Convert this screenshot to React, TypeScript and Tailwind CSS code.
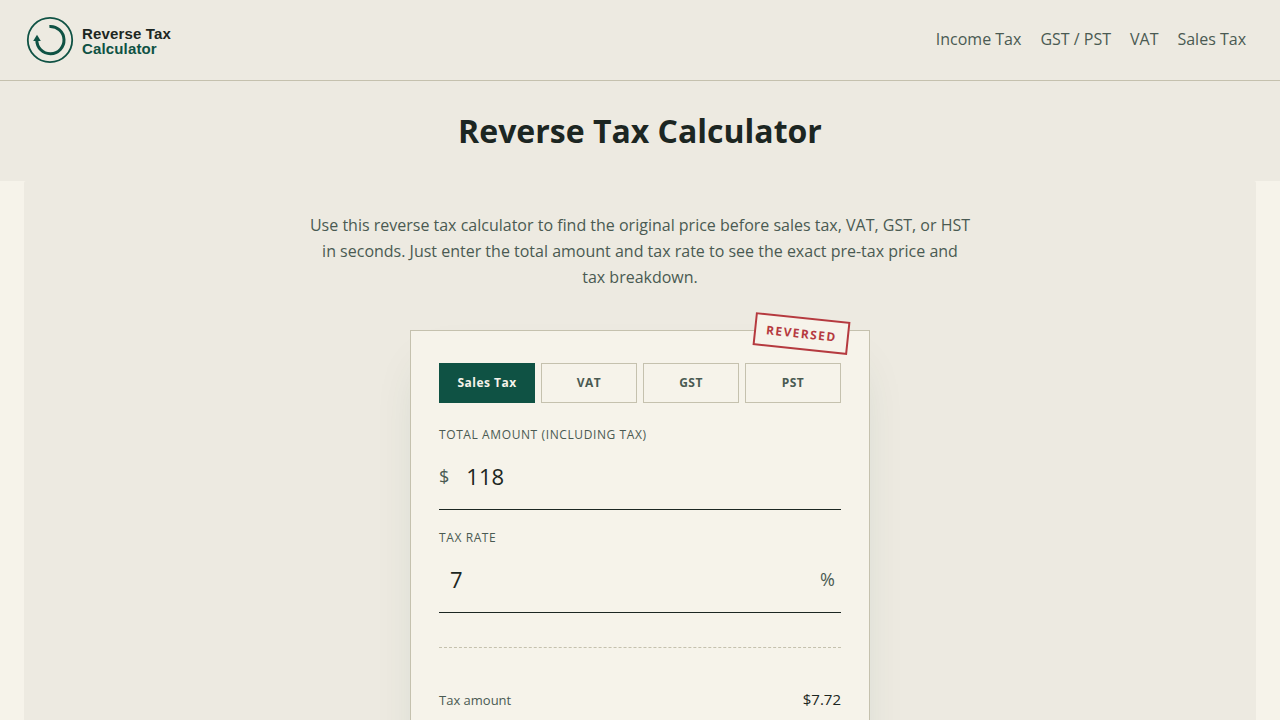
import { useState } from 'react';
import clsx from 'clsx';

const navLinks = [
  { label: 'Income Tax', href: '#income-tax' },
  { label: 'GST / PST', href: '#gst-pst' },
  { label: 'VAT', href: '#vat' },
  { label: 'Sales Tax', href: '#sales-tax' },
];

const taxTypes = ['Sales Tax', 'VAT', 'GST', 'PST'];

function Logo() {
  return (
    <a href="#home" className="flex items-center gap-2">
      <svg className="w-12 h-12" viewBox="0 0 48 48" fill="none" stroke="#0f5244" aria-hidden="true">
        <circle cx="24" cy="24" r="22.2" strokeWidth="1.8" />
        <path d="M23.4 10.6A13.6 13.6 0 1 1 10.8 24" strokeWidth="3" />
        <path d="M11 18.8L14.8 24.9H7.2Z" fill="#0f5244" stroke="none" />
      </svg>
      <span className="flex flex-col pt-0.5 font-['Liberation_Sans',Arial,sans-serif] text-[15px] leading-[15px] font-bold tracking-[0.01em]">
        <span>Reverse Tax</span>
        <span className="text-[#0f5244]">Calculator</span>
      </span>
    </a>
  );
}

export default function App() {
  const [taxType, setTaxType] = useState('Sales Tax');
  const [total, setTotal] = useState('118');
  const [rate, setRate] = useState('7');

  const amount = Number(total) || 0;
  const tax = amount - amount / (1 + (Number(rate) || 0) / 100);

  return (
    <div className="min-h-screen bg-[#f6f3ea] text-[#1c2622] font-['Open_Sans',sans-serif]">
      <header className="flex items-center justify-between bg-[#edeae1] border-b border-[#c5c1ae] py-4 pl-[26px] pr-[34px]">
        <Logo />
        <nav className="flex gap-[19px] pb-0.5 text-base text-[#4a5a52]">
          {navLinks.map(link => (
            <a key={link.label} href={link.href}>{link.label}</a>
          ))}
        </nav>
      </header>

      <section className="bg-[#edeae1] py-[30px] text-center">
        <h1 className="text-[32px] leading-10 font-bold">Reverse Tax Calculator</h1>
      </section>

      <main className="mx-6 bg-[#edeae1] rounded-t-xs px-6 pt-[31px] pb-16">
        <p className="mx-auto max-w-[662px] text-center text-base leading-[26px] text-[#4a5a52]">
          Use this reverse tax calculator to find the original price before sales tax, VAT, GST, or HST in seconds. Just
          enter the total amount and tax rate to see the exact pre-tax price and tax breakdown.
        </p>

        <div className="relative mx-auto mt-10 max-w-[460px] bg-[#f6f3ea] border border-[#c5c1ae] px-7 py-8 shadow-[0_24px_48px_-18px_rgba(15,82,68,0.16)]">
          <span className="absolute -top-3.5 right-5 rotate-6 bg-[#f6f3ea] border-2 border-[#b53a3f] px-2.5 py-1.5 text-[12px] leading-[17px] font-bold tracking-[0.12em] text-[#b53a3f]">
            REVERSED
          </span>

          <div className="grid grid-cols-4 gap-1.5">
            {taxTypes.map(type => (
              <button
                key={type}
                type="button"
                onClick={() => setTaxType(type)}
                className={clsx(
                  'h-10 border text-[12px] font-bold tracking-[0.04em]',
                  taxType === type
                    ? 'bg-[#0f5244] border-[#0f5244] text-[#f6f3ea]'
                    : 'border-[#c5c1ae] text-[#4a5a52]'
                )}
              >
                {type}
              </button>
            ))}
          </div>

          <div className="mt-6">
            <label htmlFor="total" className="block text-[12px] leading-4 tracking-wider text-[#4a5a52]">
              TOTAL AMOUNT (INCLUDING TAX)
            </label>
            <div className="flex items-center border-b border-[#1c2622] py-px">
              <span className="text-lg text-[#4a5a52]">$</span>
              <input
                id="total"
                value={total}
                onChange={e => setTotal(e.target.value)}
                inputMode="decimal"
                className="min-w-0 flex-1 h-16 bg-transparent px-[17px] text-[22px] outline-none"
              />
            </div>
          </div>

          <div className="mt-5">
            <label htmlFor="rate" className="block text-[12px] leading-4 tracking-wider text-[#4a5a52]">
              TAX RATE
            </label>
            <div className="flex items-center border-b border-[#1c2622] py-px">
              <input
                id="rate"
                value={rate}
                onChange={e => setRate(e.target.value)}
                inputMode="decimal"
                className="min-w-0 flex-1 h-16 bg-transparent px-[11px] text-[22px] outline-none"
              />
              <span className="pr-1.5 text-lg text-[#4a5a52]">%</span>
            </div>
          </div>

          <div className="mt-[34px] border-t border-dashed border-[#c5c1ae] pt-10 pb-16">
            <div className="flex items-baseline justify-between leading-[22px]">
              <span className="text-[13px] text-[#4a5a52]">Tax amount</span>
              <span className="text-[15px]">${tax.toFixed(2)}</span>
            </div>
          </div>
        </div>
      </main>
    </div>
  );
}
